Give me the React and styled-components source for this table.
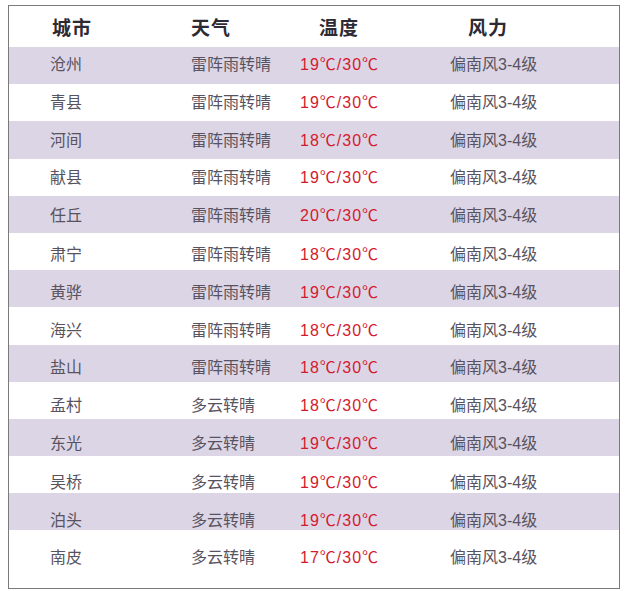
import React from 'react'
import styled, { createGlobalStyle } from 'styled-components'

const GlobalStyle = createGlobalStyle`
  body {
    margin: 0;
    background: #fff;
    font-family: "Liberation Sans", "Noto Sans CJK SC", sans-serif;
  }
`

const rows = [
  ['沧州', '雷阵雨转晴', '19℃/30℃'],
  ['青县', '雷阵雨转晴', '19℃/30℃'],
  ['河间', '雷阵雨转晴', '18℃/30℃'],
  ['献县', '雷阵雨转晴', '19℃/30℃'],
  ['任丘', '雷阵雨转晴', '20℃/30℃'],
  ['肃宁', '雷阵雨转晴', '18℃/30℃'],
  ['黄骅', '雷阵雨转晴', '19℃/30℃'],
  ['海兴', '雷阵雨转晴', '18℃/30℃'],
  ['盐山', '雷阵雨转晴', '18℃/30℃'],
  ['孟村', '多云转晴', '18℃/30℃'],
  ['东光', '多云转晴', '19℃/30℃'],
  ['吴桥', '多云转晴', '19℃/30℃'],
  ['泊头', '多云转晴', '19℃/30℃'],
  ['南皮', '多云转晴', '17℃/30℃'],
]

const Page = styled.div`
  padding: 5px 6px 0 8px;
`

const Table = styled.div`
  width: 610px;
  height: 582px;
  border: 1px solid #7a7a7a;
  background: #fff;
  box-sizing: content-box;
`

const Row = styled.div`
  display: grid;
  grid-template-columns: 141px 109px 150px 1fr;
  padding-left: 41px;
  align-items: center;
  height: ${p => p.$h}px;
  background: ${p => (p.$striped ? '#dcd5e6' : 'transparent')};
`

const HeadCell = styled.div`
  padding-left: ${p => p.$shift}px;
  font-size: 19px;
  font-weight: 600;
  color: #2e2a33;
  letter-spacing: 1px;
`

const Cell = styled.div`
  font-size: 16px;
  color: ${p => (p.$hot ? '#d41a2c' : '#58535e')};
  letter-spacing: ${p => (p.$hot ? '1px' : '0')};
  white-space: nowrap;
`

export default function App() {
  return (
    <>
      <GlobalStyle />
      <Page>
        <Table>
          <Row $h={41}>
            <HeadCell $shift={2}>城市</HeadCell>
            <HeadCell $shift={-4}>天气</HeadCell>
            <HeadCell $shift={19}>温度</HeadCell>
            <HeadCell $shift={18}>风力</HeadCell>
          </Row>
          {rows.map(([city, weather, temp], i) => {
            const shift = { transform: `translateY(${-3 + i * 0.8}px)` }
            return (
              <Row key={city} $h={37.2} $striped={i % 2 === 0}>
                <Cell style={shift}>{city}</Cell>
                <Cell style={shift}>{weather}</Cell>
                <Cell style={shift} $hot>{temp}</Cell>
                <Cell style={shift}>偏南风3-4级</Cell>
              </Row>
            )
          })}
        </Table>
      </Page>
    </>
  )
}
